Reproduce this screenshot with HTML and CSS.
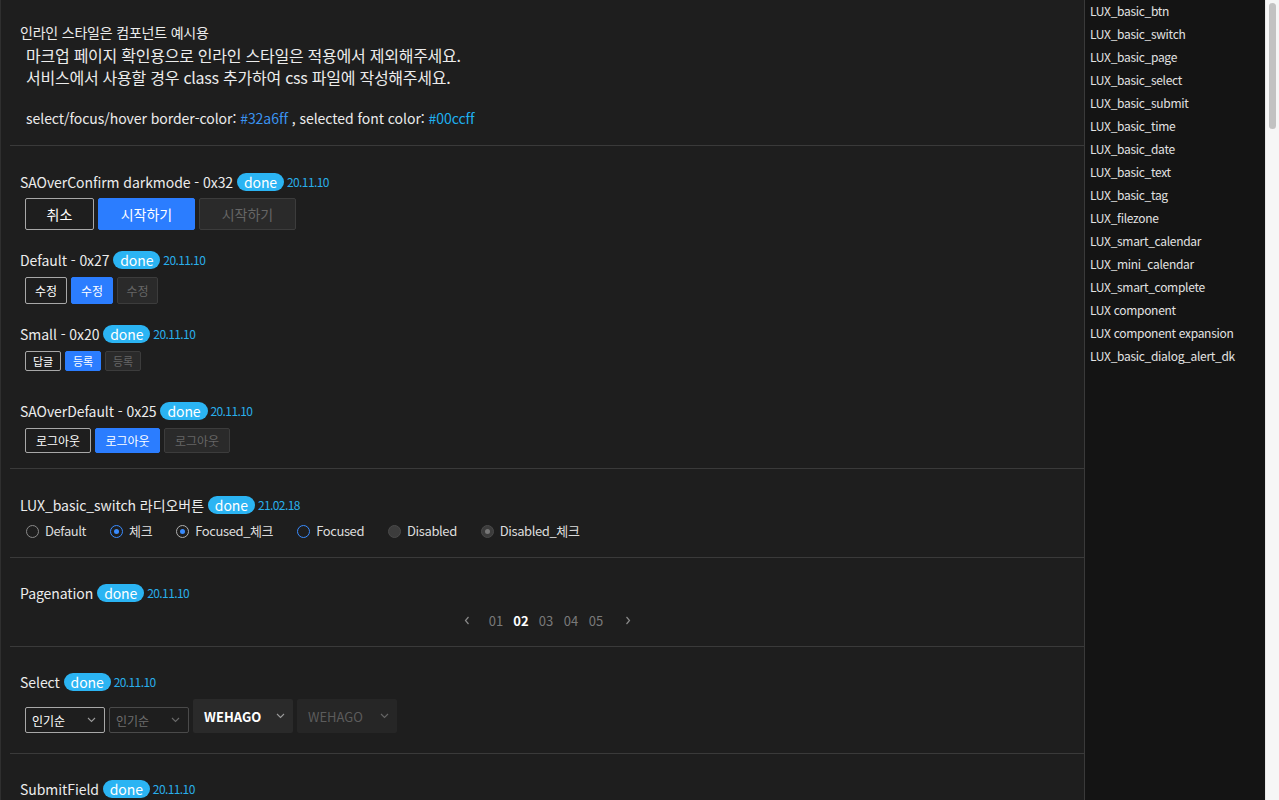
FILE: index.html
```html
<!DOCTYPE html>
<html lang="ko">
<head>
<meta charset="utf-8">
<title>LUX components</title>
<link rel="stylesheet" href="styles.css">
</head>
<body>
<div class="page">
  <main class="main">
    <section class="intro">
      <p class="intro-title">인라인 스타일은 컴포넌트 예시용</p>
      <p class="intro-desc">마크업 페이지 확인용으로 인라인 스타일은 적용에서 제외해주세요.<br>서비스에서 사용할 경우 class 추가하여 css 파일에 작성해주세요.</p>
      <p class="intro-colors">select/focus/hover border-color: <span class="c-border">#32a6ff</span> , selected font color: <span class="c-font">#00ccff</span></p>
    </section>

    <section class="sec sec-btn">
      <div class="group g1">
        <h3 class="title">SAOverConfirm darkmode - 0x32 <span class="badge">done</span><span class="date">20.11.10</span></h3>
        <div class="btns">
          <button class="btn b32 line w69">취소</button>
          <button class="btn b32 blue w97">시작하기</button>
          <button class="btn b32 dis w97">시작하기</button>
        </div>
      </div>
      <div class="group g2">
        <h3 class="title">Default - 0x27 <span class="badge">done</span><span class="date">20.11.10</span></h3>
        <div class="btns">
          <button class="btn b27 line w42">수정</button>
          <button class="btn b27 blue w42">수정</button>
          <button class="btn b27 dis w41">수정</button>
        </div>
      </div>
      <div class="group g3">
        <h3 class="title">Small - 0x20 <span class="badge">done</span><span class="date">20.11.10</span></h3>
        <div class="btns">
          <button class="btn b20 line w36">답글</button>
          <button class="btn b20 blue w36">등록</button>
          <button class="btn b20 dis w36">등록</button>
        </div>
      </div>
      <div class="group g4">
        <h3 class="title">SAOverDefault - 0x25 <span class="badge">done</span><span class="date">20.11.10</span></h3>
        <div class="btns">
          <button class="btn b25 line w66">로그아웃</button>
          <button class="btn b25 blue w65">로그아웃</button>
          <button class="btn b25 dis w66">로그아웃</button>
        </div>
      </div>
    </section>

    <section class="sec sec-radio">
      <h3 class="title">LUX_basic_switch 라디오버튼 <span class="badge">done</span><span class="date">21.02.18</span></h3>
      <div class="radios">
        <label class="radio"><span class="dot r-default"></span>Default</label>
        <label class="radio"><span class="dot r-check"></span>체크</label>
        <label class="radio"><span class="dot r-fcheck"></span>Focused_체크</label>
        <label class="radio"><span class="dot r-focus"></span>Focused</label>
        <label class="radio"><span class="dot r-dis"></span>Disabled</label>
        <label class="radio"><span class="dot r-discheck"></span>Disabled_체크</label>
      </div>
    </section>

    <section class="sec sec-page">
      <h3 class="title">Pagenation <span class="badge">done</span><span class="date">20.11.10</span></h3>
      <div class="pager">
        <span class="arrow prev"><svg width="6" height="9" viewBox="0 0 6 9"><path d="M4.5 1 L1.5 4.5 L4.5 8" fill="none" stroke="#8a8a8a" stroke-width="1.2"/></svg></span>
        <span class="num">01</span>
        <span class="num on">02</span>
        <span class="num">03</span>
        <span class="num">04</span>
        <span class="num">05</span>
        <span class="arrow next"><svg width="6" height="9" viewBox="0 0 6 9"><path d="M1.5 1 L4.5 4.5 L1.5 8" fill="none" stroke="#8a8a8a" stroke-width="1.2"/></svg></span>
      </div>
    </section>

    <section class="sec sec-select">
      <h3 class="title">Select <span class="badge">done</span><span class="date">20.11.10</span></h3>
      <div class="selects">
        <div class="sel sel-line"><span>인기순</span><svg class="chev" width="9" height="6" viewBox="0 0 9 6"><path d="M1 1 L4.5 4.5 L8 1" fill="none" stroke="#9a9a9a" stroke-width="1.1"/></svg></div>
        <div class="sel sel-line sel-dis"><span>인기순</span><svg class="chev" width="9" height="6" viewBox="0 0 9 6"><path d="M1 1 L4.5 4.5 L8 1" fill="none" stroke="#6a6a6a" stroke-width="1.1"/></svg></div>
        <div class="sel sel-box"><span>WEHAGO</span><svg class="chev" width="9" height="6" viewBox="0 0 9 6"><path d="M1 1 L4.5 4.5 L8 1" fill="none" stroke="#9a9a9a" stroke-width="1.1"/></svg></div>
        <div class="sel sel-box sel-boxdis"><span>WEHAGO</span><svg class="chev" width="9" height="6" viewBox="0 0 9 6"><path d="M1 1 L4.5 4.5 L8 1" fill="none" stroke="#666" stroke-width="1.1"/></svg></div>
      </div>
    </section>

    <section class="sec sec-submit">
      <h3 class="title">SubmitField <span class="badge">done</span><span class="date">20.11.10</span></h3>
    </section>
  </main>

  <nav class="side">
    <a>LUX_basic_btn</a>
    <a>LUX_basic_switch</a>
    <a>LUX_basic_page</a>
    <a>LUX_basic_select</a>
    <a>LUX_basic_submit</a>
    <a>LUX_basic_time</a>
    <a>LUX_basic_date</a>
    <a>LUX_basic_text</a>
    <a>LUX_basic_tag</a>
    <a>LUX_filezone</a>
    <a>LUX_smart_calendar</a>
    <a>LUX_mini_calendar</a>
    <a>LUX_smart_complete</a>
    <a>LUX component</a>
    <a>LUX component expansion</a>
    <a>LUX_basic_dialog_alert_dk</a>
  </nav>

  <div class="scrollbar"><div class="thumb"></div></div>
</div>
</body>
</html>
```

FILE: styles.css
```css
* { box-sizing: border-box; }
html, body { margin: 0; padding: 0; }
body {
  background: #1e1e1e;
  color: #ececec;
  font-family: "Noto Sans CJK KR", "Noto Sans", sans-serif;
  overflow: hidden;
}
p, h3 { margin: 0; }

.page {
  display: flex;
  height: 800px;
  overflow: hidden;
}

.main {
  flex: 1;
  min-width: 0;
  border-left: 1px solid #2f2f2f;
  padding-left: 9px;
}

/* intro */
.intro {
  padding: 22px 0 17px 10px;
  border-bottom: 1px solid #3a3a3a;
}
.intro-title { font-size: 14px; line-height: 20px; letter-spacing: -0.2px; }
.intro-desc { font-size: 16px; line-height: 22px; margin-top: 2px; padding-left: 6px; letter-spacing: -0.25px; }
.intro-colors { font-size: 14px; line-height: 20px; margin-top: 20px; padding-left: 6px; letter-spacing: -0.05px; }
.c-border { color: #3a93f0; }
.c-font { color: #1fb0f0; }

/* sections */
.sec {
  padding-left: 10px;
  border-bottom: 1px solid #3a3a3a;
}
.title {
  display: flex;
  align-items: center;
  font-size: 14px;
  font-weight: 400;
  line-height: 20px;
  height: 20px;
  white-space: pre;
  letter-spacing: -0.06px;
  color: #ececec;
}
.badge {
  display: inline-block;
  height: 18px;
  line-height: 18px;
  padding: 0 7px;
  border-radius: 9px;
  background: #2bb4f3;
  color: #fff;
  font-size: 14px;
  letter-spacing: -0.1px;
}
.date {
  font-size: 12px;
  color: #29aeea;
  margin-left: 3px;
  letter-spacing: -0.6px;
}

/* buttons */
.sec-btn { padding-top: 26px; padding-bottom: 15px; }
.g2 { margin-top: 20px; }
.g3 { margin-top: 20px; }
.g4 { margin-top: 30px; }
.g1 .btns { margin-top: 6px; }
.btns {
  display: flex;
  gap: 4px;
  padding-left: 5px;
  margin-top: 7px;
}
.btn {
  display: inline-flex;
  align-items: center;
  justify-content: center;
  border: 1px solid;
  border-radius: 2px;
  padding: 0;
  font-family: inherit;
  color: #fff;
  background: transparent;
}
.b32 { height: 32px; font-size: 14px; }
.b27 { height: 27px; font-size: 12px; }
.b20 { height: 20px; font-size: 11px; }
.b25 { height: 25px; font-size: 12px; }
.line { border-color: #a8a8a8; background: #1e1e1e; }
.blue { border-color: #2b7dff; background: #2b7dff; }
.dis { border-color: #3c3c3c; background: #2a2a2a; color: #666; }
.w69 { width: 69px; } .w97 { width: 97px; }
.w42 { width: 42px; } .w41 { width: 41px; }
.w36 { width: 36px; }
.w66 { width: 66px; } .w65 { width: 65px; }

/* radios */
.sec-radio { padding-top: 26px; padding-bottom: 16px; }
.radios {
  display: flex;
  gap: 24px;
  padding-left: 6px;
  margin-top: 6px;
  height: 20px;
}
.radio {
  display: flex;
  align-items: center;
  gap: 6px;
  font-size: 13px;
  letter-spacing: -0.4px;
  line-height: 20px;
  color: #dcdcdc;
}
.dot {
  position: relative;
  width: 13px;
  height: 13px;
  border-radius: 50%;
  border: 1px solid #8a8a8a;
  flex: none;
}
.dot::after {
  content: "";
  position: absolute;
  left: 3px; top: 3px;
  width: 5px; height: 5px;
  border-radius: 50%;
  display: none;
}
.r-check { border-color: #3a8cff; }
.r-check::after { display: block; background: #3a8cff; }
.r-fcheck { border-color: #b0b0b0; }
.r-fcheck::after { display: block; background: #3a8cff; }
.r-focus { border-color: #3a8cff; }
.r-dis { border-color: #4a4a4a; background: #3c3c3c; }
.r-discheck { border-color: #4a4a4a; background: #3c3c3c; }
.r-discheck::after { display: block; background: #777; }

/* pagination */
.sec-page { padding-top: 25px; padding-bottom: 16px; }
.pager {
  display: flex;
  justify-content: center;
  align-items: center;
  height: 20px;
  margin-top: 7px;
  padding-right: 10px;
}
.num {
  width: 25px;
  text-align: center;
  font-size: 13px;
  color: #7a7a7a;
}
.num.on { color: #fff; font-weight: 700; }
.arrow { display: flex; align-items: center; }
.prev { margin-right: 14px; }
.next { margin-left: 16px; }

/* selects */
.sec-select { padding-top: 25px; padding-bottom: 20px; }
.selects {
  display: flex;
  align-items: flex-end;
  gap: 4px;
  padding-left: 5px;
  margin-top: 7px;
}
.sel {
  display: flex;
  align-items: center;
  justify-content: space-between;
  border-radius: 2px;
}
.sel-line {
  width: 80px;
  height: 26px;
  border: 1px solid #a8a8a8;
  padding: 0 8px 0 6px;
  font-size: 12px;
  color: #fff;
}
.sel-dis { border-color: #4a4a4a; color: #6f6f6f; }
.sel-box {
  width: 100px;
  height: 34px;
  background: #2a2a2a;
  padding: 0 8px 0 11px;
  font-size: 13px;
  font-weight: 700;
  color: #fff;
}
.sel-boxdis { background: #262626; color: #5c5c5c; font-weight: 400; }

.sec-submit { padding-top: 25px; height: 80px; border-bottom: 0; }

/* side */
.side {
  width: 181px;
  flex: none;
  background: #141414;
  border-left: 1px solid #3a3a3a;
  padding-left: 5px;
  display: flex;
  flex-direction: column;
}
.side a {
  font-size: 12px;
  line-height: 23px;
  color: #e2e2e2;
  white-space: nowrap;
  letter-spacing: -0.3px;
}
.side a:first-child { margin-top: -1px; }

.scrollbar {
  width: 14px;
  flex: none;
  background: #f6f6f6;
  border-left: 1px solid #e8e8e8;
  padding: 3px 3px 0 3px;
}
.thumb {
  width: 7px;
  height: 126px;
  border-radius: 4px;
  background: #c2c2c2;
}
```
